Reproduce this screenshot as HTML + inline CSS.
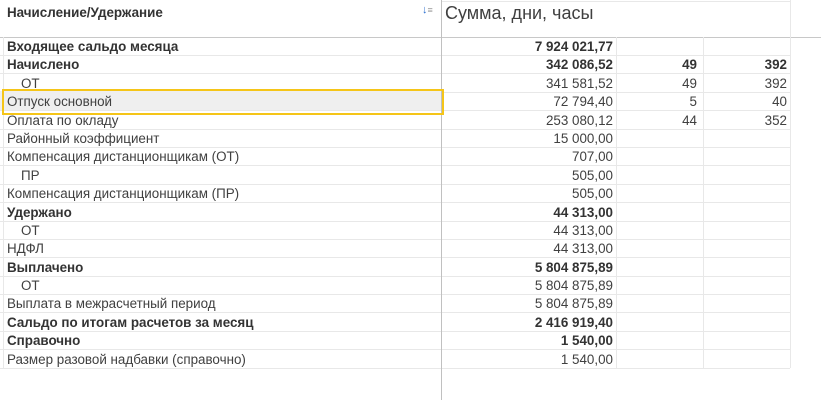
<!DOCTYPE html>
<html><head><meta charset="utf-8"><style>
body{margin:0;width:821px;height:400px;background:#fff;position:relative;overflow:hidden;font-family:"Liberation Sans",Arial,sans-serif;font-size:13.4px;color:#404040}
.r{position:absolute;left:0;width:790px;height:18px;border-bottom:1px solid #e8e8e8}
.r div{position:absolute;top:1px;line-height:18px;white-space:nowrap}
.a{left:7px}.i{left:21px}
.s{right:177px;text-align:right}.d{right:93px}.h{right:3px}
.b{font-weight:bold;color:#333}
.v{position:absolute;top:37px;height:331px;width:1px;background:#e8e8e8}
</style></head><body>
<div style="position:absolute;left:7px;top:5px;font-weight:bold;color:#333">Начисление/Удержание</div>
<div style="position:absolute;left:422px;top:4px;font-size:11px;color:#2a6fd0">&#8595;<span style="color:#999;font-size:9px">&#8801;</span></div>
<div style="position:absolute;left:445px;top:3px;font-size:18px;color:#404040">Сумма, дни, часы</div>
<div style="position:absolute;left:441px;top:1px;width:349px;height:1px;background:#e8e8e8"></div>
<div style="position:absolute;left:0;top:37px;width:821px;height:1px;background:#c8c8c8"></div>
<div style="position:absolute;left:790px;top:0;height:368px;width:1px;background:#e8e8e8"></div>
<div style="position:absolute;left:3px;top:37px;height:331px;width:1px;background:#e8e8e8"></div>
<div class="v" style="left:616px"></div>
<div class="v" style="left:703px"></div>
<div id="rows"></div>
<div style="position:absolute;left:441px;top:0;height:400px;width:1px;background:#c0c0c0;z-index:2"></div>
<script>
var R=[
["Входящее сальдо месяца","7 924 021,77","","",1,0],
["Начислено","342 086,52","49","392",1,0],
["ОТ","341 581,52","49","392",0,1],
["Отпуск основной","72 794,40","5","40",0,0],
["Оплата по окладу","253 080,12","44","352",0,0],
["Районный коэффициент","15 000,00","","",0,0],
["Компенсация дистанционщикам (ОТ)","707,00","","",0,0],
["ПР","505,00","","",0,1],
["Компенсация дистанционщикам (ПР)","505,00","","",0,0],
["Удержано","44 313,00","","",1,0],
["ОТ","44 313,00","","",0,1],
["НДФЛ","44 313,00","","",0,0],
["Выплачено","5 804 875,89","","",1,0],
["ОТ","5 804 875,89","","",0,1],
["Выплата в межрасчетный период","5 804 875,89","","",0,0],
["Сальдо по итогам расчетов за месяц","2 416 919,40","","",1,0],
["Справочно","1 540,00","","",1,0],
["Размер разовой надбавки (справочно)","1 540,00","","",0,0]];
var h="";
R.forEach(function(r,k){var t=37+k*18.39;var c=r[4]?" b":"";
h+='<div class="r" style="top:'+t+'px">'+'<div class="'+(r[5]?"i":"a")+c+'">'+r[0]+'</div><div class="s'+c+'">'+r[1]+'</div><div class="d'+c+'">'+r[2]+'</div><div class="h'+c+'">'+r[3]+'</div></div>';});
document.getElementById("rows").innerHTML=h;
</script>
<div style="position:absolute;left:0;top:91px;width:441px;height:19px;background:#efefef;z-index:0"></div>
<div style="position:absolute;left:2px;top:89px;width:438px;height:22px;border:2px solid #f5c518;z-index:3"></div>
<div style="position:absolute;left:7px;top:93px;line-height:18px;z-index:4">Отпуск основной</div>
</body></html>
